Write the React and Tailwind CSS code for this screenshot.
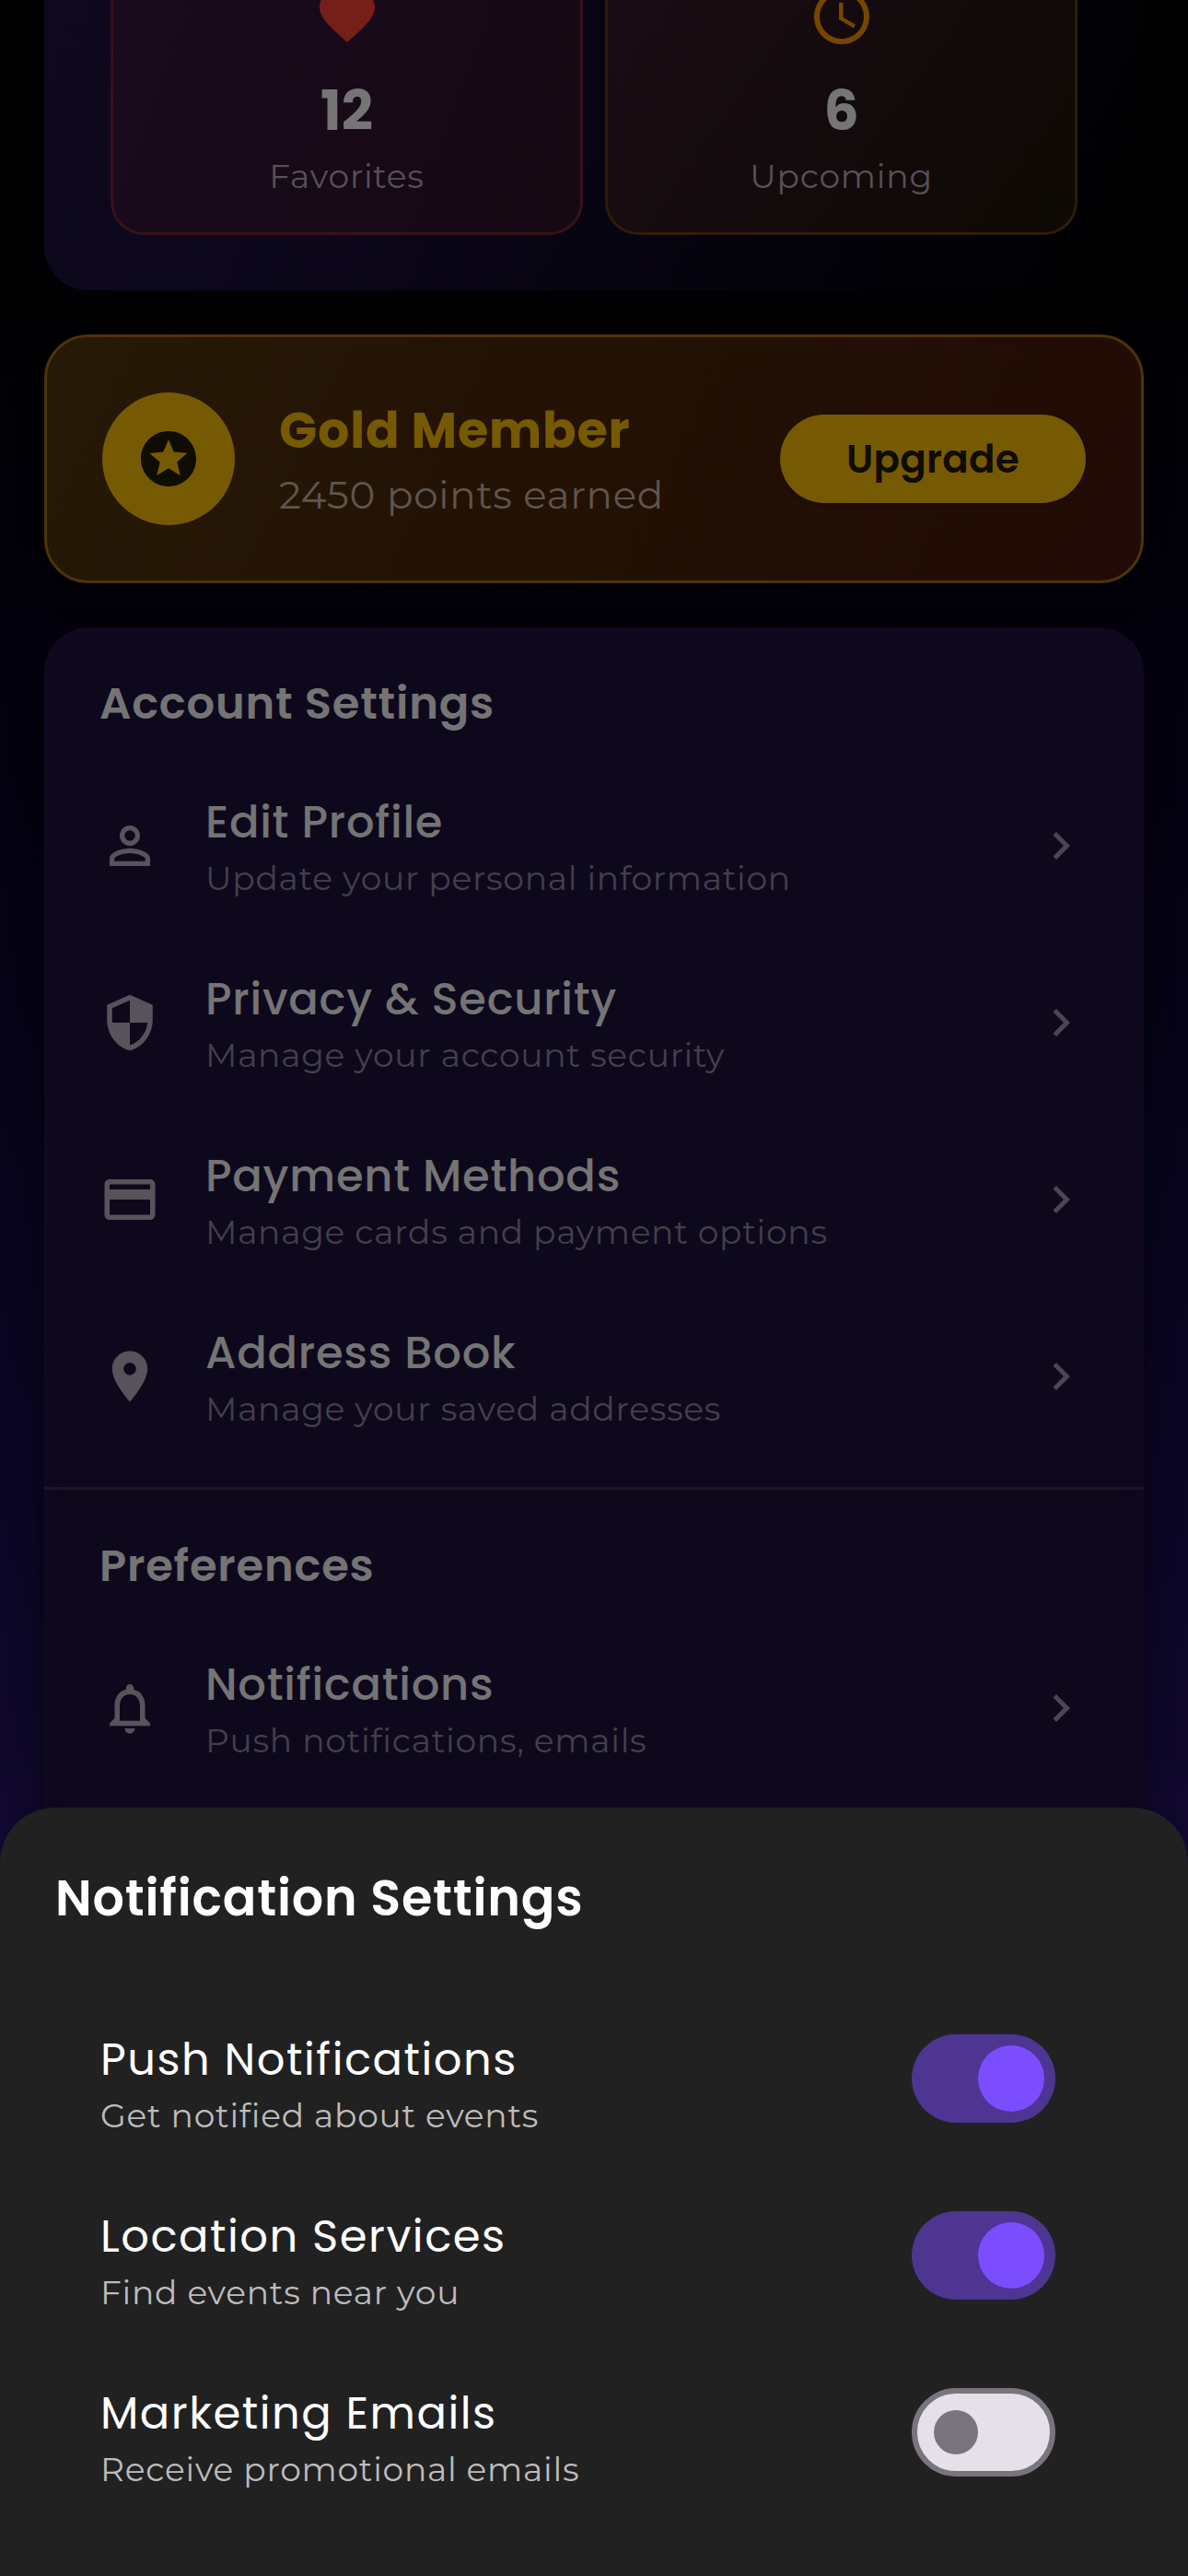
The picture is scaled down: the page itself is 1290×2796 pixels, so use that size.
import {
  MdAccessTime,
  MdChevronRight,
  MdFavorite,
  MdLocationOn,
  MdNotificationsNone,
  MdPayment,
  MdPersonOutline,
  MdSecurity,
  MdStars,
} from "react-icons/md";

const poppins = "font-['Poppins','Inter',sans-serif]";
const montserrat = "font-['Montserrat','Open_Sans',sans-serif]";

const accountItems = [
  { icon: MdPersonOutline, title: "Edit Profile", subtitle: "Update your personal information" },
  { icon: MdSecurity, title: "Privacy & Security", subtitle: "Manage your account security" },
  { icon: MdPayment, title: "Payment Methods", subtitle: "Manage cards and payment options" },
  { icon: MdLocationOn, title: "Address Book", subtitle: "Manage your saved addresses" },
];

const preferenceItems = [
  { icon: MdNotificationsNone, title: "Notifications", subtitle: "Push notifications, emails" },
];

const toggles = [
  { title: "Push Notifications", subtitle: "Get notified about events", on: true },
  { title: "Location Services", subtitle: "Find events near you", on: true },
  { title: "Marketing Emails", subtitle: "Receive promotional emails", on: false },
];

function StatCard({ icon: Icon, iconClass, cardClass, value, label }) {
  return (
    <div className={`flex h-[255px] flex-1 flex-col items-center overflow-hidden rounded-b-[36px] border-x-[3px] border-b-[3px] ${cardClass}`}>
      <Icon className={`-mt-[18px] size-[72px] shrink-0 ${iconClass}`} />
      <div className={`mt-[21px] text-[60px] leading-[90px] font-bold text-[#757575] ${poppins}`}>{value}</div>
      <div className={`mt-px text-[36px] leading-[50px] tracking-[0.8px] text-[#565057] ${montserrat}`}>{label}</div>
    </div>
  );
}

function SettingsRow({ icon: Icon, title, subtitle }) {
  return (
    <div className="flex h-[192px] items-center px-[60px]">
      <Icon className="size-[66px] shrink-0 text-[#57535a]" />
      <div className="ml-[49px] flex-1 pb-[3px]">
        <div className={`pt-px text-[48px] leading-[72px] font-medium tracking-[0.75px] text-[#757474] ${poppins}`}>{title}</div>
        <div className={`text-[36px] leading-[48px] tracking-[0.75px] text-[#443f49] ${montserrat}`}>{subtitle}</div>
      </div>
      <MdChevronRight className="size-[60px] shrink-0 text-[#4a464f]" />
    </div>
  );
}

function Section({ title, items }) {
  return (
    <section className="pt-[47px] pb-[24px]">
      <h2 className={`mb-[22px] px-[60px] text-[48px] leading-[72px] font-semibold tracking-[0.8px] text-[#757474] ${poppins}`}>{title}</h2>
      {items.map((item) => (
        <SettingsRow key={item.title} {...item} />
      ))}
    </section>
  );
}

function Toggle({ on }) {
  return on ? (
    <div className="flex h-[96px] w-[156px] items-center justify-end rounded-full bg-[#4e3591] pr-[12px]">
      <div className="size-[72px] rounded-full bg-[#7c4dff]" />
    </div>
  ) : (
    <div className="flex h-[96px] w-[156px] items-center rounded-full border-[6px] border-[#79747e] bg-[#e6e0e9] pl-[18px]">
      <div className="size-[48px] rounded-full bg-[#79747e]" />
    </div>
  );
}

function ToggleRow({ title, subtitle, on }) {
  return (
    <div className="flex h-[192px] items-center justify-between pr-[84px] pl-[49px]">
      <div className="pt-[7px]">
        <div className={`pt-px text-[48px] leading-[72px] tracking-[1.5px] text-white ${poppins}`}>{title}</div>
        <div className={`text-[36px] leading-[48px] tracking-[0.75px] text-[#bcbcbc] ${montserrat}`}>{subtitle}</div>
      </div>
      <Toggle on={on} />
    </div>
  );
}

export default function App() {
  return (
    <div className="relative h-[2796px] w-[1290px] overflow-hidden bg-[linear-gradient(180deg,#000000_0%,#010103_12%,#03010c_25%,#07041b_45%,#0c0626_60%,#10082d_70%)]">
      <div className="flex flex-col gap-[48px] px-[48px]">
        <div className="flex h-[315px] shrink-0 gap-[24px] rounded-b-[48px] bg-[linear-gradient(115deg,#0f091f_0%,#0b0619_35%,#04020a_72%,#000000_100%)] px-[72px]">
          <StatCard
            icon={MdFavorite}
            iconClass="text-[#751f19]"
            cardClass="border-[#36111b] bg-[linear-gradient(110deg,#1a0a1d,#150912)]"
            value="12"
            label="Favorites"
          />
          <StatCard
            icon={MdAccessTime}
            iconClass="text-[#764600]"
            cardClass="border-[#301c06] bg-[linear-gradient(125deg,#190d14,#130a0b_55%,#0e0903)]"
            value="6"
            label="Upcoming"
          />
        </div>

        <div className="flex h-[270px] shrink-0 items-center rounded-[48px] border-[3px] border-[#4d3306] bg-[linear-gradient(115deg,#261907,#231104_50%,#210b06)] px-[60px] shadow-[0_12px_30px_rgba(0,0,0,0.45)]">
          <div className="flex size-[144px] items-center justify-center rounded-full bg-[#765a03]">
            <MdStars className="size-[72px] text-[#0f0c01]" />
          </div>
          <div className="ml-[48px] flex-1 pb-[2px]">
            <div className={`text-[54px] leading-[80px] font-bold tracking-[0.8px] text-[#765a03] ${poppins}`}>Gold Member</div>
            <div className={`text-[42px] leading-[60px] tracking-[0.75px] text-[#5e554f] ${montserrat}`}>2450 points earned</div>
          </div>
          <div className={`flex h-[96px] w-[332px] items-center justify-center rounded-full bg-[#765a03] pt-px text-[42px] leading-[95px] font-semibold tracking-[0.3px] text-[#0f0c01] shadow-[0_2px_4px_rgba(0,0,0,0.25)] ${poppins}`}>
            Upgrade
          </div>
        </div>

        <div className="h-[1500px] shrink-0 rounded-[48px] bg-[#0e081d] shadow-[0_12px_30px_rgba(0,0,0,0.55),inset_0_0_24px_rgba(40,18,75,0.15)]">
          <Section title="Account Settings" items={accountItems} />
          <div className="h-[3px] bg-[#1a1527]" />
          <Section title="Preferences" items={preferenceItems} />
        </div>
      </div>

      <div className="absolute inset-x-0 bottom-0 h-[834px] rounded-t-[60px] bg-[#212121] px-[60px] pt-[58px]">
        <h1 className={`mb-[59px] text-[54px] leading-[81px] font-semibold tracking-[0.8px] text-white ${poppins}`}>Notification Settings</h1>
        {toggles.map((t) => (
          <ToggleRow key={t.title} {...t} />
        ))}
      </div>
    </div>
  );
}
